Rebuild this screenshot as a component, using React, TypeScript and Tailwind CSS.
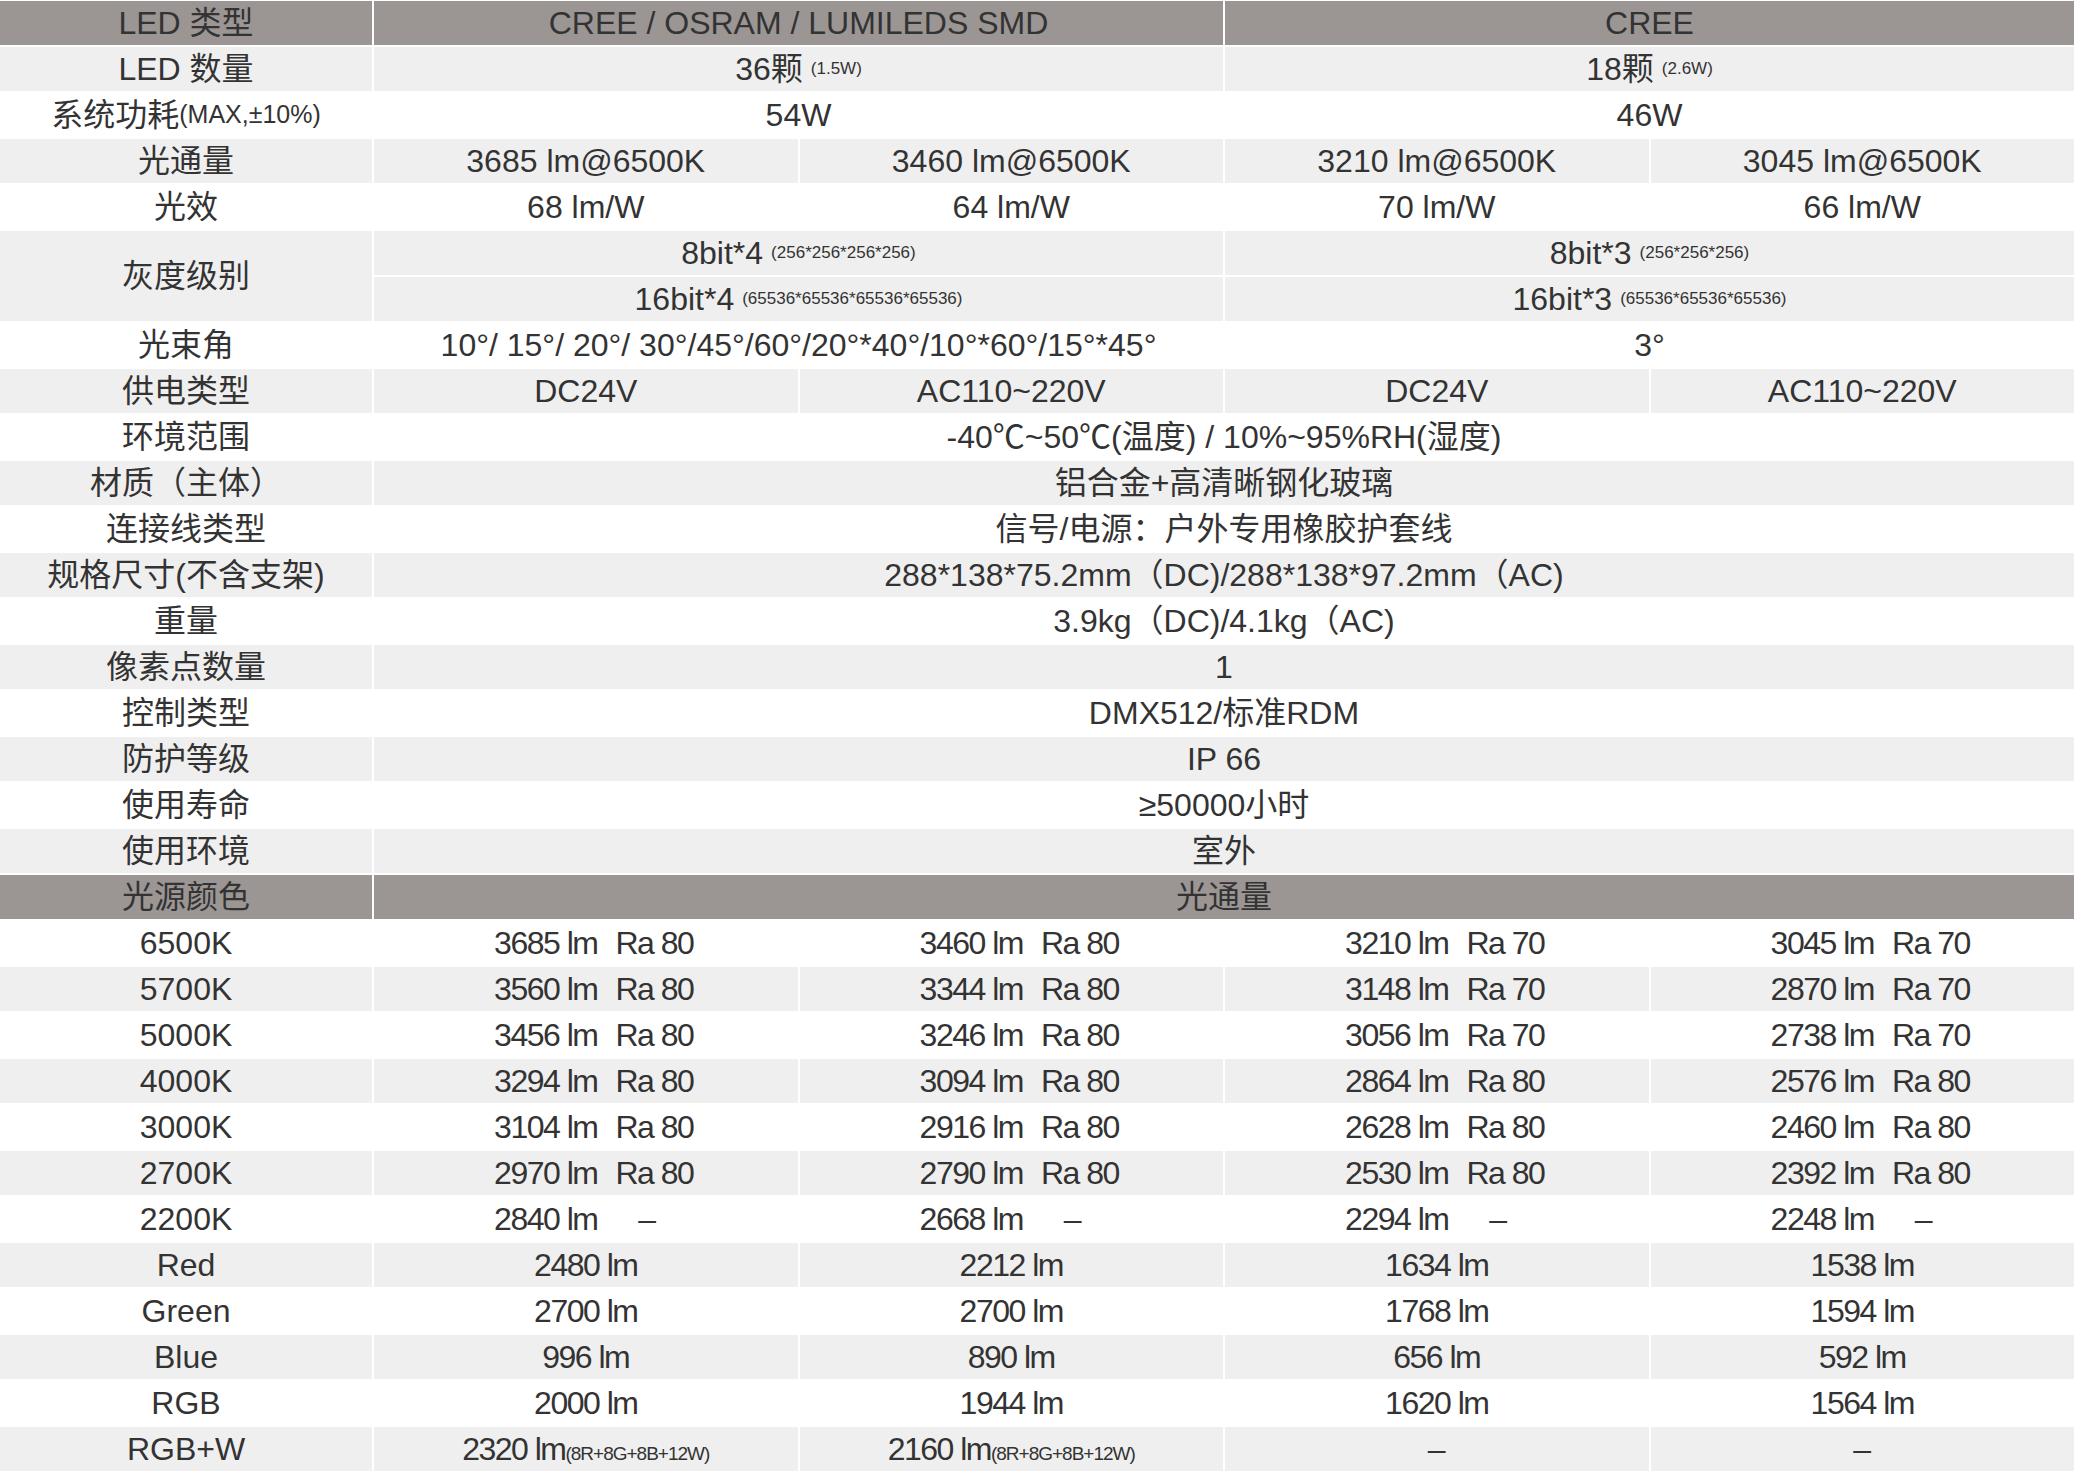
import React from "react";

type C = { t: React.ReactNode; s?: number; r?: number };
const sm = (t: string) => <span className="text-[17px] ml-2">{t}</span>;

const top: { bg: string; cells: C[] }[] = [];
function row(bg: string, cells: C[]) { top.push({ bg, cells }); }
const H = "bg-[#9b9694]", G = "bg-[#efefef]", W = "bg-white";

row(H, [{ t: "LED 类型" }, { t: "CREE / OSRAM / LUMILEDS SMD", s: 2 }, { t: "CREE", s: 2 }]);
row(G, [{ t: "LED 数量" }, { t: <>36颗{sm("(1.5W)")}</>, s: 2 }, { t: <>18颗{sm("(2.6W)")}</>, s: 2 }]);
row(W, [{ t: <>系统功耗<span className="text-[25px]">(MAX,±10%)</span></> }, { t: "54W", s: 2 }, { t: "46W", s: 2 }]);
row(G, [{ t: "光通量" }, { t: "3685 lm@6500K" }, { t: "3460 lm@6500K" }, { t: "3210 lm@6500K" }, { t: "3045 lm@6500K" }]);
row(W, [{ t: "光效" }, { t: "68 lm/W" }, { t: "64 lm/W" }, { t: "70 lm/W" }, { t: "66 lm/W" }]);

const rows2: [string, string][] = [
  ["供电类型", ""], ["环境范围", "-40℃~50℃(温度) / 10%~95%RH(湿度)"], ["材质（主体）", "铝合金+高清晰钢化玻璃"],
  ["连接线类型", "信号/电源：户外专用橡胶护套线"], ["规格尺寸(不含支架)", "288*138*75.2mm（DC)/288*138*97.2mm（AC)"],
  ["重量", "3.9kg（DC)/4.1kg（AC)"], ["像素点数量", "1"], ["控制类型", "DMX512/标准RDM"], ["防护等级", "IP 66"],
  ["使用寿命", "≥50000小时"], ["使用环境", "室外"],
];

const lm: [string, string[]][] = [
  ["6500K", ["3685|80", "3460|80", "3210|70", "3045|70"]],
  ["5700K", ["3560|80", "3344|80", "3148|70", "2870|70"]],
  ["5000K", ["3456|80", "3246|80", "3056|70", "2738|70"]],
  ["4000K", ["3294|80", "3094|80", "2864|80", "2576|80"]],
  ["3000K", ["3104|80", "2916|80", "2628|80", "2460|80"]],
  ["2700K", ["2970|80", "2790|80", "2530|80", "2392|80"]],
  ["2200K", ["2840|-", "2668|-", "2294|-", "2248|-"]],
];
const lm2: [string, string[]][] = [
  ["Red", ["2480 lm", "2212 lm", "1634 lm", "1538 lm"]],
  ["Green", ["2700 lm", "2700 lm", "1768 lm", "1594 lm"]],
  ["Blue", ["996 lm", "890 lm", "656 lm", "592 lm"]],
  ["RGB", ["2000 lm", "1944 lm", "1620 lm", "1564 lm"]],
];

const cell = "flex items-center justify-center whitespace-nowrap";

export default function App() {
  const out: React.ReactNode[] = [];
  let k = 0;
  const add = (bg: string, c: C, extra = "") =>
    out.push(
      <div key={k++} className={`${cell} ${bg} ${extra}`} style={{ gridColumn: `span ${c.s ?? 1}`, gridRow: c.r ? `span ${c.r}` : undefined }}>
        {c.t}
      </div>
    );
  top.forEach((r) => r.cells.forEach((c) => add(r.bg, c)));
  // 灰度
  add(G, { t: "灰度级别", r: 2 });
  add(G, { t: <>8bit*4{sm("(256*256*256*256)")}</>, s: 2 });
  add(G, { t: <>8bit*3{sm("(256*256*256)")}</>, s: 2 });
  add(G, { t: <>16bit*4{sm("(65536*65536*65536*65536)")}</>, s: 2 });
  add(G, { t: <>16bit*3{sm("(65536*65536*65536)")}</>, s: 2 });
  add(W, { t: "光束角" });
  add(W, { t: "10°/ 15°/ 20°/ 30°/45°/60°/20°*40°/10°*60°/15°*45°", s: 2 });
  add(W, { t: "3°", s: 2 });
  rows2.forEach(([a, b], i) => {
    const bg = i % 2 === 0 ? G : W;
    add(bg, { t: a });
    if (i === 0) ["DC24V", "AC110~220V", "DC24V", "AC110~220V"].forEach((x) => add(bg, { t: x }));
    else add(bg, { t: b, s: 4 });
  });
  add(H, { t: "光源颜色" });
  add(H, { t: "光通量", s: 4 });
  const bot = "tracking-[-1.5px]";
  lm.forEach(([a, vs], i) => {
    const bg = i % 2 === 0 ? W : G;
    add(bg, { t: a });
    vs.forEach((v) => {
      const [n, r] = v.split("|");
      add(bg, {
        t: (
          <span className={`${bot} flex`}>
            <span>{n} lm</span>
            <span className="ml-[18px] w-[62px] text-center">{r === "-" ? "–" : `Ra ${r}`}</span>
          </span>
        ),
      });
    });
  });
  lm2.forEach(([a, vs], i) => {
    const bg = i % 2 === 0 ? G : W;
    add(bg, { t: a });
    vs.forEach((v) => add(bg, { t: <span className={bot}>{v}</span> }));
  });
  add(G, { t: "RGB+W" });
  add(G, { t: <span className={bot}>2320 lm<span className="text-[19px] tracking-[-1px]">(8R+8G+8B+12W)</span></span> });
  add(G, { t: <span className={bot}>2160 lm<span className="text-[19px] tracking-[-1px]">(8R+8G+8B+12W)</span></span> });
  add(G, { t: "–" });
  add(G, { t: "–" });

  return (
    <div
      className="w-[2074px] h-[1474px] bg-white text-[#333] text-[32px] grid grid-cols-[372px_1fr_1fr_1fr_1fr] auto-rows-[44px] gap-[2px] pt-[1px]"
      style={{ fontFamily: '"Liberation Sans", "Noto Sans CJK SC", sans-serif' }}
    >
      {out}
    </div>
  );
}
